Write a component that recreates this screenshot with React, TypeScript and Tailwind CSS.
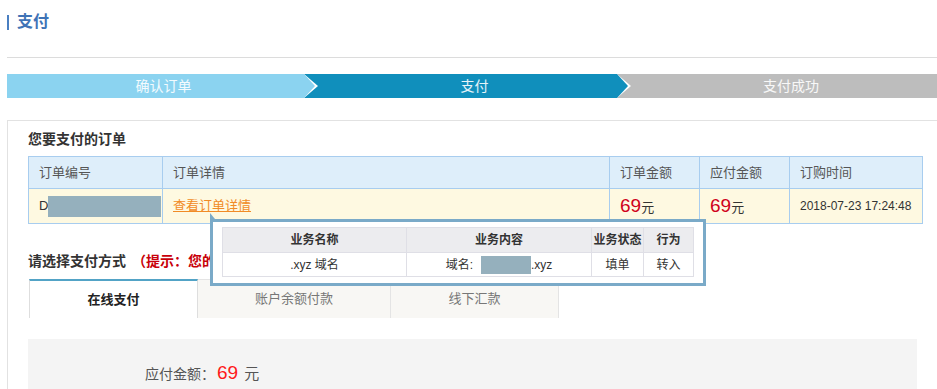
import React from 'react'

const steps = [
  { label: '确认订单', bg: 'bg-[#8bd3f0]', w: 'w-[297px]', pl: 'pl-[16px]' },
  { label: '支付', bg: 'bg-[#108fbc]', w: 'w-[313px]', pl: 'pl-[28px]' },
  { label: '支付成功', bg: 'bg-[#bdbdbd]', w: 'flex-1', pl: 'pl-[28px]' },
]

function Arrow({ color }: { color: string }) {
  // chevron tip with white outline, sits over the start of the next step
  return (
    <>
      <span className="absolute right-[-14px] top-0 z-10 h-0 w-0 border-y-[12px] border-l-[14px] border-y-transparent border-l-white" />
      <span
        className={`absolute right-[-11px] top-0 z-10 h-0 w-0 border-y-[12px] border-l-[11px] border-y-transparent ${color}`}
      />
    </>
  )
}

export default function App() {
  return (
    <div className="h-[389px] w-[937px] overflow-hidden bg-white font-['Liberation_Sans','Noto_Sans_CJK_SC',sans-serif] text-[#333]">
      {/* title */}
      <div className="ml-[7px] border-b border-[#dcdcdc] pb-[26px] pt-[13px]">
        <div className="flex h-[18px] items-center">
          <span className="h-[15px] w-[2px] bg-[#4a7fc1]" />
          <span className="ml-[8px] text-[16px] font-bold leading-[18px] text-[#3f73b6]">支付</span>
        </div>
      </div>

      {/* steps */}
      <div className="ml-[7px] mt-[16px] flex h-[24px]">
        {steps.map((s, i) => (
          <div
            key={s.label}
            className={`relative flex h-[24px] items-center justify-center ${s.w} ${s.bg} ${s.pl} text-[14px] text-white/90`}
          >
            {s.label}
            {i === 0 && <Arrow color="border-l-[#8bd3f0]" />}
            {i === 1 && <Arrow color="border-l-[#108fbc]" />}
          </div>
        ))}
      </div>

      {/* panel */}
      <div className="ml-[7px] mt-[22px] border-l border-t border-[#e2e2e2] pl-[20px] pt-[8px]">
        <div className="text-[14px] font-bold leading-[20px] text-[#333]">您要支付的订单</div>

        <div className="relative mt-[7px] w-[895px]">
          <table className="w-full border-collapse text-[13px]">
            <thead>
              <tr className="h-[32px] bg-[#deeefa] text-left text-[#555]">
                <th className="w-[134px] border border-[#a8cdef] pl-[10px] font-normal">订单编号</th>
                <th className="w-[447px] border border-[#a8cdef] pl-[10px] font-normal">订单详情</th>
                <th className="w-[90px] border border-[#a8cdef] pl-[10px] font-normal">订单金额</th>
                <th className="w-[90px] border border-[#a8cdef] pl-[10px] font-normal">应付金额</th>
                <th className="border border-[#a8cdef] pl-[10px] font-normal">订购时间</th>
              </tr>
            </thead>
            <tbody>
              <tr className="h-[35px] bg-[#fef9e1]">
                <td className="border border-[#a8cdef] pl-[10px]">
                  <div className="flex items-center">
                    <span>D</span>
                    <span className="h-[21px] w-[113px] bg-[#95b0bd]" />
                  </div>
                </td>
                <td className="border border-[#a8cdef] pl-[10px]">
                  <a className="text-[#f18b26] underline">查看订单详情</a>
                </td>
                <td className="border border-[#a8cdef] pl-[10px]">
                  <span className="text-[19px] text-[#d0021b]">69</span>
                  <span className="text-[13px]">元</span>
                </td>
                <td className="border border-[#a8cdef] pl-[10px]">
                  <span className="text-[19px] text-[#d0021b]">69</span>
                  <span className="text-[13px]">元</span>
                </td>
                <td className="border border-[#a8cdef] pl-[10px] text-[12px] text-[#333]">2018-07-23 17:24:48</td>
              </tr>
            </tbody>
          </table>

          {/* detail popup */}
          <div className="absolute left-[182px] top-[63px] z-20 w-[496px] border-[3px] border-[#7aaac8] bg-white px-[9px] pb-[6px] pt-[5px]">
            <span className="absolute left-[-3px] top-[-9px] h-0 w-0 border-b-[6px] border-r-[5px] border-b-[#7aaac8] border-r-transparent" />
            <table className="w-full border-collapse text-[12px] text-[#333]">
              <thead>
                <tr className="h-[25px] bg-[#ececef]">
                  <th className="w-[184px] border border-[#dfdfe6] font-bold">业务名称</th>
                  <th className="w-[185px] border border-[#dfdfe6] font-bold">业务内容</th>
                  <th className="w-[52px] border border-[#dfdfe6] font-bold">业务状态</th>
                  <th className="border border-[#dfdfe6] font-bold">行为</th>
                </tr>
              </thead>
              <tbody>
                <tr className="h-[24px] text-center">
                  <td className="border border-[#dfdfe6]">.xyz 域名</td>
                  <td className="border border-[#dfdfe6]">
                    <span className="inline-flex items-center">
                      域名:
                      <span className="ml-[8px] h-[18px] w-[50px] bg-[#95b0bd]" />
                      .xyz
                    </span>
                  </td>
                  <td className="border border-[#dfdfe6]">填单</td>
                  <td className="border border-[#dfdfe6]">转入</td>
                </tr>
              </tbody>
            </table>
          </div>
        </div>

        <div className="mt-[27px] text-[14px] font-bold leading-[20px]">
          请选择支付方式
          <span className="ml-[6px] text-[#c8000a]">（提示：您的订单）</span>
        </div>

        {/* tabs */}
        <div className="mt-[8px] flex h-[39px] text-[13px]">
          <div className="ml-[1px] flex w-[169px] items-center justify-center border-l border-r border-t-2 border-l-[#dedede] border-r-[#dedede] border-t-[#52a3c6] bg-white font-bold text-[#222]">
            在线支付
          </div>
          <div className="flex w-[193px] items-center justify-center border-r border-t border-[#e4e4e4] bg-[#f8f7f4] text-[#777]">
            账户余额付款
          </div>
          <div className="flex w-[168px] items-center justify-center border-r border-t border-[#e4e4e4] bg-[#f8f7f4] text-[#777]">
            线下汇款
          </div>
        </div>

        {/* amount box */}
        <div className="mt-[21px] h-[60px] w-[889px] bg-[#f4f4f4] pl-[117px] pt-[20px]">
          <div className="flex items-baseline text-[14px] text-[#555]">
            <span>应付金额：</span>
            <span className="ml-[2px] text-[19px] text-[#ff1a1a]">69</span>
            <span className="ml-[6px] text-[15px]">元</span>
          </div>
        </div>
      </div>
    </div>
  )
}
